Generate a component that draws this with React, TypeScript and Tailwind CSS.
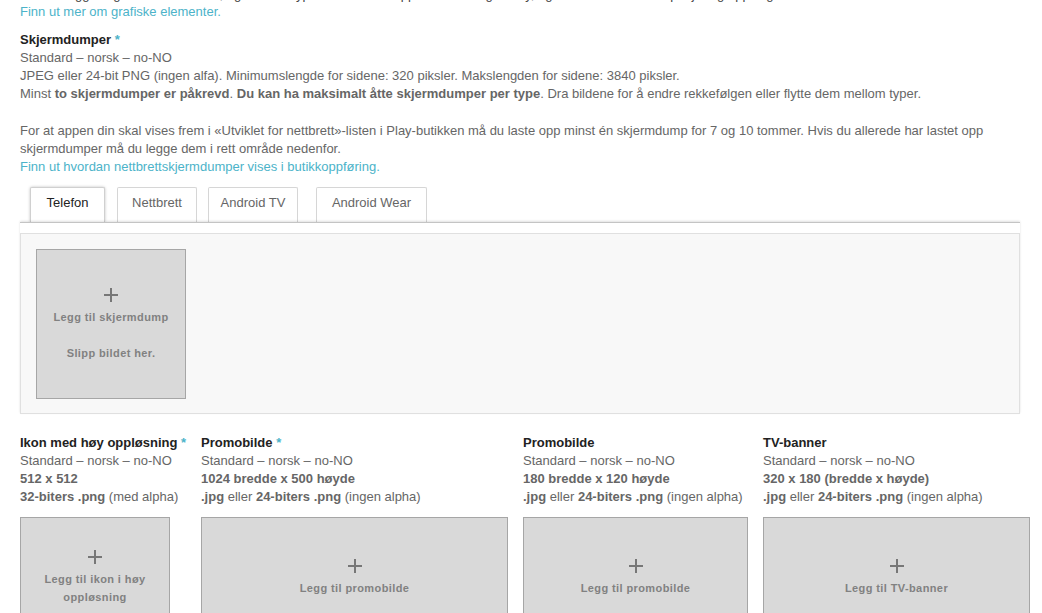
import React from "react";

const Plus = () => (
  <svg width="16" height="16" viewBox="0 0 16 16" className="mx-auto">
    <path d="M8 1v14M1 8h14" stroke="#777" strokeWidth="2" />
  </svg>
);

const Star = () => <span className="text-[#4cb3c9]"> *</span>;

function DropBox({ width, label }: { width: string; label: React.ReactNode }) {
  return (
    <div className={`${width} h-[120px] bg-[#d9d9d9] border border-[#a6a6a6] flex flex-col items-center justify-center text-center`}>
      <Plus />
      <div className="mt-[5px] text-[11px] leading-[18px] font-bold tracking-[0.4px] text-[#818181]">{label}</div>
    </div>
  );
}

function AssetColumn({
  colWidth,
  title,
  required,
  size,
  format,
  box,
}: {
  colWidth: string;
  title: string;
  required?: boolean;
  size: string;
  format: React.ReactNode;
  box: React.ReactNode;
}) {
  return (
    <div className={`${colWidth} shrink-0`}>
      <div className="font-bold text-[#222]">
        {title}
        {required && <Star />}
      </div>
      <div>Standard – norsk – no-NO</div>
      <div className="font-bold text-[#666]">{size}</div>
      <div className="whitespace-nowrap">{format}</div>
      <div className="mt-[11px]">{box}</div>
    </div>
  );
}

export default function App() {
  const tabs = [
    { name: "Telefon", w: "w-[75px]", ml: "ml-[10px]", active: true },
    { name: "Nettbrett", w: "w-[80px]", ml: "ml-[12px]" },
    { name: "Android TV", w: "w-[90px]", ml: "ml-[11px]" },
    { name: "Android Wear", w: "w-[111px]", ml: "ml-[18px]" },
  ];

  return (
    <div className="h-[613px] overflow-hidden bg-white font-['Liberation_Sans',Arial,sans-serif] text-[13px] leading-[18px] text-[#666]">
      <div className="px-5">
        <p className="-mt-[14px] h-[17px] overflow-hidden text-[#444] whitespace-nowrap">
          Du kan legge til grafiske elementer, og dette er typisk innhold for appen din i Google Play, og når de brukes i kampanjer og oppslag.
        </p>
        <a className="block text-[#4cb3c9]">Finn ut mer om grafiske elementer.</a>

        <div className="mt-[10px]">
          <div className="font-bold text-[#222]">
            Skjermdumper
            <Star />
          </div>
          <div>Standard – norsk – no-NO</div>
          <div>JPEG eller 24-bit PNG (ingen alfa). Minimumslengde for sidene: 320 piksler. Makslengden for sidene: 3840 piksler.</div>
          <div>
            Minst <b>to skjermdumper er påkrevd</b>. <b>Du kan ha maksimalt åtte skjermdumper per type</b>. Dra bildene for å endre
            rekkefølgen eller flytte dem mellom typer.
          </div>
        </div>

        <p className="mt-[19px]">
          For at appen din skal vises frem i «Utviklet for nettbrett»-listen i Play-butikken må du laste opp minst én skjermdump for 7 og 10
          tommer. Hvis du allerede har lastet opp
          <br />
          skjermdumper må du legge dem i rett område nedenfor.
        </p>
        <a className="block text-[#4cb3c9]">Finn ut hvordan nettbrettskjermdumper vises i butikkoppføring.</a>

        <div className="mt-[11px] flex h-[35px] items-stretch">
          {tabs.map((t) => (
            <div
              key={t.name}
              className={`${t.w} ${t.ml} flex items-center justify-center pb-[4px] rounded-t-[2px] border border-b-0 bg-white ${
                t.active
                  ? "relative z-10 border-[#d0d0d0] text-[#222] shadow-[0_0_3px_rgba(0,0,0,0.25)]"
                  : "border-[#d6d6d6] text-[#666]"
              }`}
            >
              {t.name}
            </div>
          ))}
        </div>

        <div className="relative z-20 w-[1000px] border-t border-[#c4c4c4] bg-white pt-[10px] shadow-[0_-1px_2px_rgba(0,0,0,0.12)]">
          <div className="h-[181px] border border-[#e0e0e0] bg-[#f8f8f8] p-[15px]">
            <div className="w-[150px] h-[150px] bg-[#d9d9d9] border border-[#a6a6a6] flex flex-col items-center justify-center text-center">
              <Plus />
              <div className="mt-[5px] text-[11px] leading-[18px] font-bold tracking-[0.4px] text-[#818181]">Legg til skjermdump</div>
              <div className="mt-[18px] text-[11px] leading-[18px] font-bold tracking-[0.4px] text-[#818181]">Slipp bildet her.</div>
            </div>
          </div>
        </div>

        <div className="mt-[20px] flex">
          <AssetColumn
            colWidth="w-[181px]"
            title="Ikon med høy oppløsning"
            required
            size="512 x 512"
            format={
              <>
                <b>32-biters .png</b> (med alpha)
              </>
            }
            box={
              <DropBox
                width="w-[150px]"
                label={
                  <>
                    Legg til ikon i høy
                    <br />
                    oppløsning
                  </>
                }
              />
            }
          />
          <AssetColumn
            colWidth="w-[322px]"
            title="Promobilde"
            required
            size="1024 bredde x 500 høyde"
            format={
              <>
                <b>.jpg</b> eller <b>24-biters .png</b> (ingen alpha)
              </>
            }
            box={<DropBox width="w-[307px]" label="Legg til promobilde" />}
          />
          <AssetColumn
            colWidth="w-[240px]"
            title="Promobilde"
            size="180 bredde x 120 høyde"
            format={
              <>
                <b>.jpg</b> eller <b>24-biters .png</b> (ingen alpha)
              </>
            }
            box={<DropBox width="w-[225px]" label="Legg til promobilde" />}
          />
          <AssetColumn
            colWidth="w-[267px]"
            title="TV-banner"
            size="320 x 180 (bredde x høyde)"
            format={
              <>
                <b>.jpg</b> eller <b>24-biters .png</b> (ingen alpha)
              </>
            }
            box={<DropBox width="w-[267px]" label="Legg til TV-banner" />}
          />
        </div>
      </div>
    </div>
  );
}
